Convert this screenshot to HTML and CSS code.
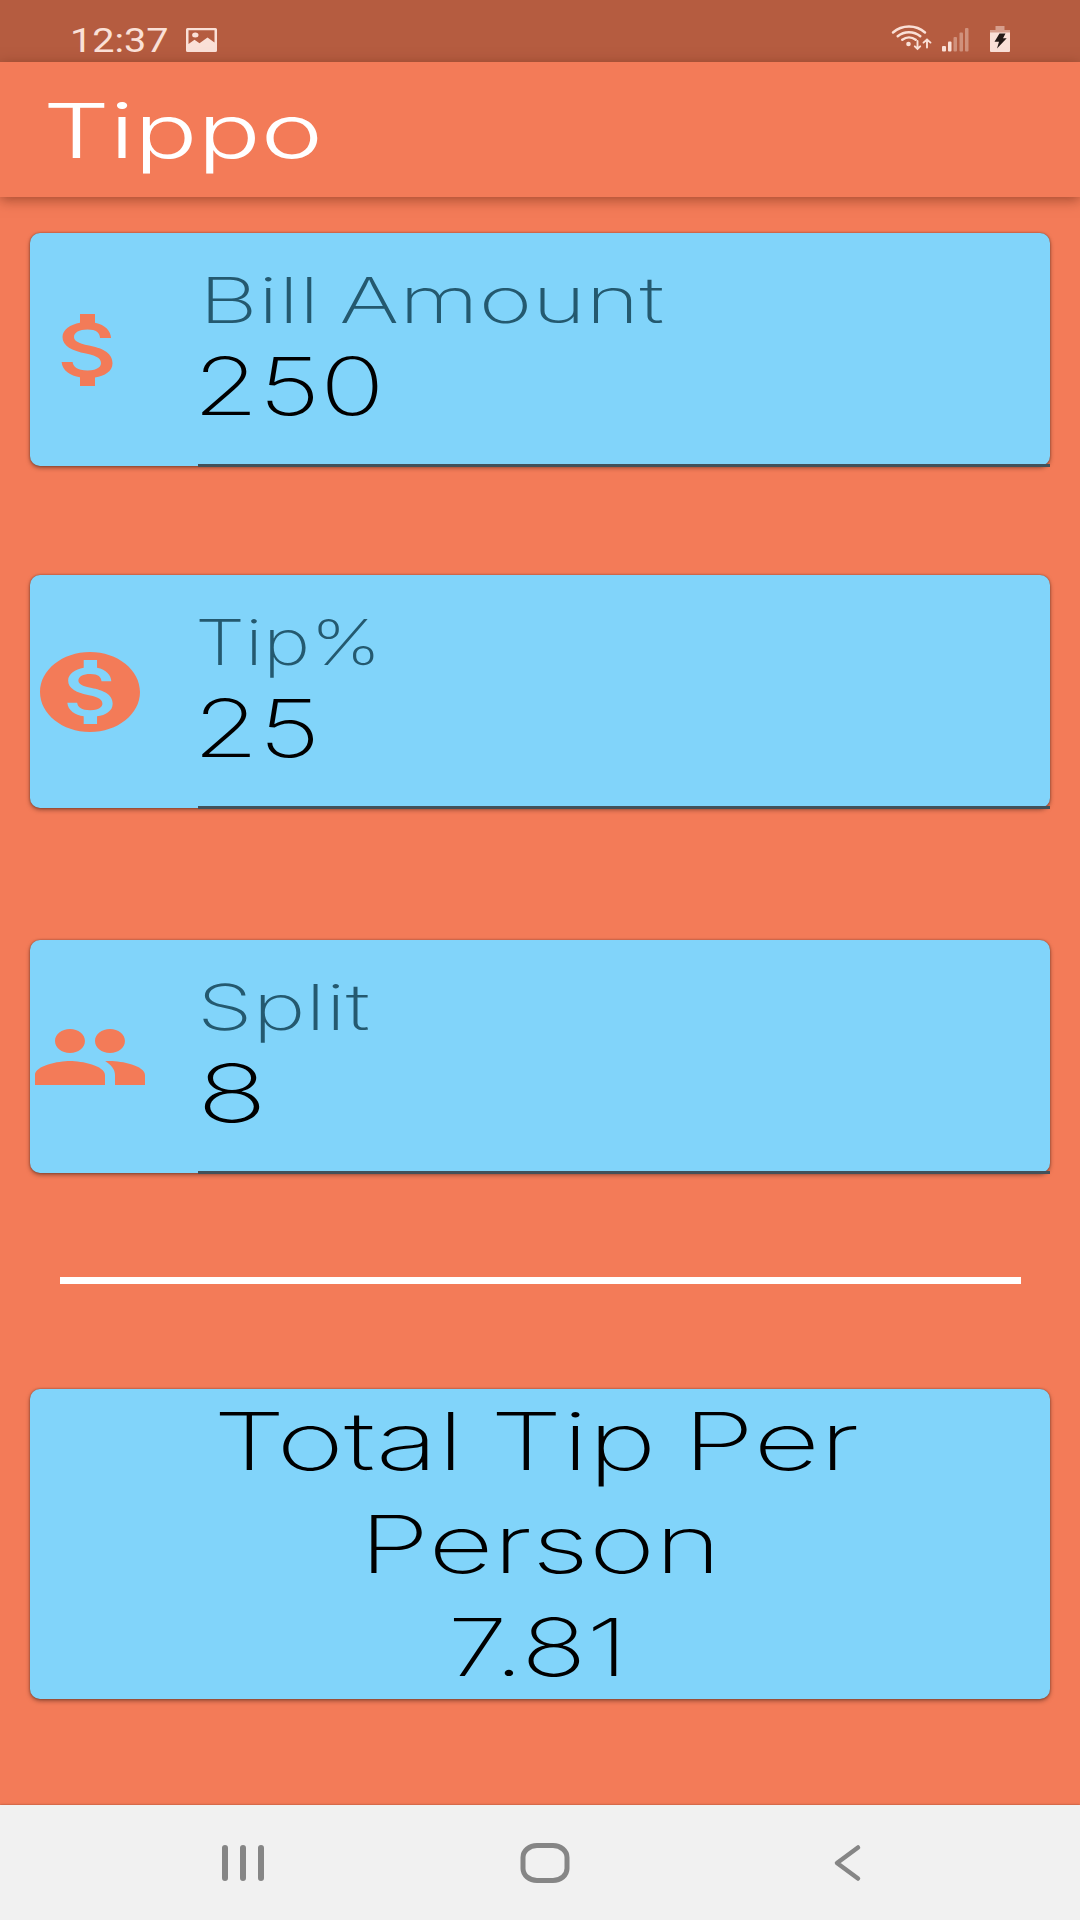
FILE: index.html
```html
<!DOCTYPE html>
<html lang="en">
<head>
<meta charset="utf-8">
<title>Tippo</title>
<link rel="stylesheet" href="styles.css">
</head>
<body>
<div class="screen">
  <div class="status">
    <span class="clock wide">12:37</span>
    <svg class="picture" viewBox="0 0 31 24" preserveAspectRatio="none"><path fill-rule="evenodd" d="M1.5 0h28a1.5 1.5 0 0 1 1.5 1.5v21a1.5 1.5 0 0 1-1.5 1.5h-28A1.5 1.5 0 0 1 0 22.500v-21A1.500 1.500 0 0 1 1.500 0zM2.500 2.300v13.700l6-4.200 5 3.400 8-5.700 7 5V2.300z"/><ellipse cx="9.300" cy="7" rx="3.200" ry="2.500"/></svg>
    <svg class="wifi" viewBox="0 0 42 28"><g fill="none" stroke="#fae0d7" stroke-width="2.500" stroke-linecap="round"><path d="M2 8.500C11 .6 25 .6 34 8.500M6.700 12.200c6.500-5.400 16-5.400 22.600 0M11.300 15.800c4-3 9.400-3 13.400 0"/><path stroke-width="1.900" d="M26.500 17v7.600M23.800 22.300l2.700 2.700 2.700-2.700M36 23.500v-7.600M32.500 18.600 36 15.500l3.500 3.100"/></g><circle cx="17.500" cy="20" r="2.300" fill="#fae0d7"/></svg>
    <svg class="signal" viewBox="0 0 27 24"><g fill="#fae0d7"><rect y="18" width="4" height="5.500" rx="1"/><rect x="6" y="13.500" width="3.500" height="10" rx="1"/><g opacity=".4"><rect x="11.500" y="9" width="3.500" height="14.500" rx="1"/><rect x="17.500" y="4.500" width="3.500" height="19" rx="1"/><rect x="23" width="3.500" height="23.500" rx="1"/></g></g></svg>
    <svg class="battery" viewBox="0 0 20 26"><path opacity=".5" d="M5.500 0h9v4H20v3H0V4h5.500z"/><path d="M0 6.500h20V25a1 1 0 0 1-1 1H1a1 1 0 0 1-1-1z"/><path fill="#241a17" d="M9.500 7.500h6l-2.500 4.700h3.700L7 22.500l2-6.800H4.500z"/></svg>
  </div>
  <header class="appbar"><h1 class="title wide">Tippo</h1></header>
  <main class="content">
    <section class="card field">
      <svg class="icon" viewBox="0 0 24 24" preserveAspectRatio="none"><path d="M11.800 10.900c-2.270-.59-3-1.200-3-2.150 0-1.090 1.010-1.850 2.700-1.850 1.780 0 2.440.85 2.500 2.100h2.210c-.07-1.720-1.120-3.300-3.210-3.810V3h-3v2.160c-1.940.42-3.500 1.680-3.500 3.610 0 2.310 1.910 3.460 4.700 4.130 2.500.6 3 1.480 3 2.410 0 .69-.49 1.790-2.700 1.790-2.060 0-2.870-.92-2.980-2.100h-2.200c.12 2.190 1.760 3.420 3.680 3.830V21h3v-2.150c1.950-.37 3.500-1.500 3.500-3.550 0-2.840-2.430-3.810-4.700-4.400z"/></svg>
      <div class="entry">
        <span class="label bill wide">Bill Amount</span>
        <span class="value amount wide">250</span>
      </div>
    </section>
    <section class="card field percent">
      <svg class="icon" viewBox="0 0 24 24" preserveAspectRatio="none"><path d="M12 2C6.480 2 2 6.480 2 12s4.480 10 10 10 10-4.480 10-10S17.520 2 12 2zm1.410 16.090V20h-2.670v-1.930c-1.710-.36-3.160-1.460-3.270-3.400h1.960c.1 1.050.82 1.870 2.650 1.870 1.960 0 2.400-.98 2.400-1.590 0-.83-.44-1.610-2.670-2.140-2.480-.6-4.180-1.620-4.180-3.670 0-1.720 1.390-2.840 3.110-3.210V4h2.670v1.950c1.860.45 2.790 1.860 2.850 3.390H14.300c-.05-1.110-.64-1.870-2.220-1.870-1.500 0-2.400.68-2.400 1.640 0 .84.65 1.390 2.670 1.910s4.180 1.390 4.180 3.910c-.01 1.830-1.380 2.830-3.120 3.160z"/></svg>
      <div class="entry">
        <span class="label tip wide">Tip%</span>
        <span class="value amount wide">25</span>
      </div>
    </section>
    <section class="card field people">
      <svg class="icon" viewBox="0 0 24 24" preserveAspectRatio="none"><path d="M16 11c1.660 0 2.990-1.340 2.990-3S17.660 5 16 5c-1.660 0-3 1.340-3 3s1.340 3 3 3zm-8 0c1.660 0 2.990-1.340 2.990-3S9.660 5 8 5C6.340 5 5 6.340 5 8s1.340 3 3 3zm0 2c-2.330 0-7 1.170-7 3.500V19h14v-2.500c0-2.330-4.670-3.500-7-3.500zm8 0c-.29 0-.62.02-.97.05 1.160.84 1.970 1.970 1.970 3.450V19h6v-2.500c0-2.330-4.670-3.500-7-3.500z"/></svg>
      <div class="entry">
        <span class="label split wide">Split</span>
        <span class="value count wide">8</span>
      </div>
    </section>
    <hr class="divider">
    <section class="card total">
      <span class="line first wide">Total Tip Per</span>
      <span class="line second wide">Person</span>
      <span class="line result wide">7.81</span>
    </section>
  </main>
  <nav class="nav">
    <svg class="recents" viewBox="0 0 44 36"><path d="M4 3v30M22 3v30M40 3v30" stroke-width="6"/></svg>
    <svg class="home" viewBox="0 0 50 40"><rect x="3" y="2.500" width="44" height="35" rx="14" ry="12" stroke-width="5"/></svg>
    <svg class="back" viewBox="0 0 30 38"><path d="M26 3.500 5 19l21 15.500" stroke-width="4.500"/></svg>
  </nav>
</div>
</body>
</html>
```
FILE: styles.css
```css
* { box-sizing: border-box; }
body { margin: 0; font-family: Inter, sans-serif; font-weight: 230; }
svg { display: block; flex: none; }
.screen {
  width: 1080px;
  height: 1920px;
  display: flex;
  flex-direction: column;
  overflow: hidden;
  background: #f37b58;
}
/* Letterforms are stretched horizontally; --stretch varies per text. */
.wide {
  display: block;
  width: max-content;
  white-space: nowrap;
  transform: scaleX(var(--stretch, 1.4));
  transform-origin: left;
}
.status {
  height: 62px;
  flex: none;
  display: flex;
  align-items: flex-start;
  padding: 21px 70px 0;
  background: #b55c40;
  fill: #fae0d7;
}
.clock {
  --stretch: 1.2;
  width: 116px;
  font: 400 33px/40px Roboto, sans-serif;
  color: #fae0d7;
}
.picture { width: 31px; height: 24px; margin-top: 7px; }
.wifi { width: 42px; height: 28px; margin: 3px 0 0 674px; }
.signal { width: 27px; height: 24px; margin: 7px 0 0 9px; }
.battery { width: 20px; height: 26px; margin: 5px 0 0 21px; }
.appbar {
  height: 135px;
  flex: none;
  padding: 19px 43px 0;
  box-shadow: 0 3px 12px rgba(90, 30, 10, .5);
}
.title {
  --stretch: 1.4;
  margin: 0;
  font-size: 75px;
  font-weight: 270;
  line-height: 100px;
  color: #fff;
}
.content {
  flex: 1;
  display: flex;
  flex-direction: column;
  padding: 36px 30px 0;
}
.card {
  flex: none;
  border-radius: 10px;
  background: #81d4fa;
  box-shadow: 0 2px 4px rgba(60, 30, 20, .5), 0 0 2px rgba(60, 30, 20, .5);
}
.field { height: 233px; display: flex; align-items: center; }
.percent { margin-top: 109px; }
.people { margin-top: 132px; }
.icon { width: 120px; height: 96px; fill: #f37b58; }
.entry {
  flex: 1;
  height: 234px;
  align-self: flex-start;
  margin-left: 48px;
  padding-top: 27px;
  border-bottom: 3px solid #42515a;
}
.label {
  font-size: 63px;
  font-weight: 200;
  line-height: 80px;
  color: #24596f;
}
.bill { --stretch: 1.45; margin-left: 1px; word-spacing: -4px; }
.tip { --stretch: 1.27; margin-left: -3px; }
.split { --stretch: 1.42; margin-left: -1px; }
.value { font-size: 80px; line-height: 92px; color: #000; }
.amount { --stretch: 1.33; margin-left: -5px; }
.count { --stretch: 1.45; margin-left: -1px; }
.divider {
  width: 961px;
  height: 7px;
  flex: none;
  margin: 104px auto 0;
  border: 0;
  background: #fff;
}
.total {
  height: 310px;
  margin-top: 105px;
  display: flex;
  flex-direction: column;
  align-items: center;
}
.line {
  font-size: 80px;
  line-height: 103px;
  color: #000;
  transform-origin: center;
}
.first { --stretch: 1.44; word-spacing: -4px; margin-right: 7px; }
.second { --stretch: 1.41; }
.result { --stretch: 1.35; margin-right: 4px; }
.nav {
  height: 115px;
  flex: none;
  display: flex;
  padding: 38px 0 0 221px;
  background: #f1f1f1;
  fill: none;
  stroke: #868686;
  stroke-linecap: round;
  stroke-linejoin: round;
  box-shadow: 0 0 2px rgba(100, 40, 20, .6);
}
.recents { width: 44px; height: 36px; margin-top: 2px; }
.home { width: 50px; height: 40px; margin-left: 255px; }
.back { width: 30px; height: 38px; margin: 1px 0 0 262px; }
```
